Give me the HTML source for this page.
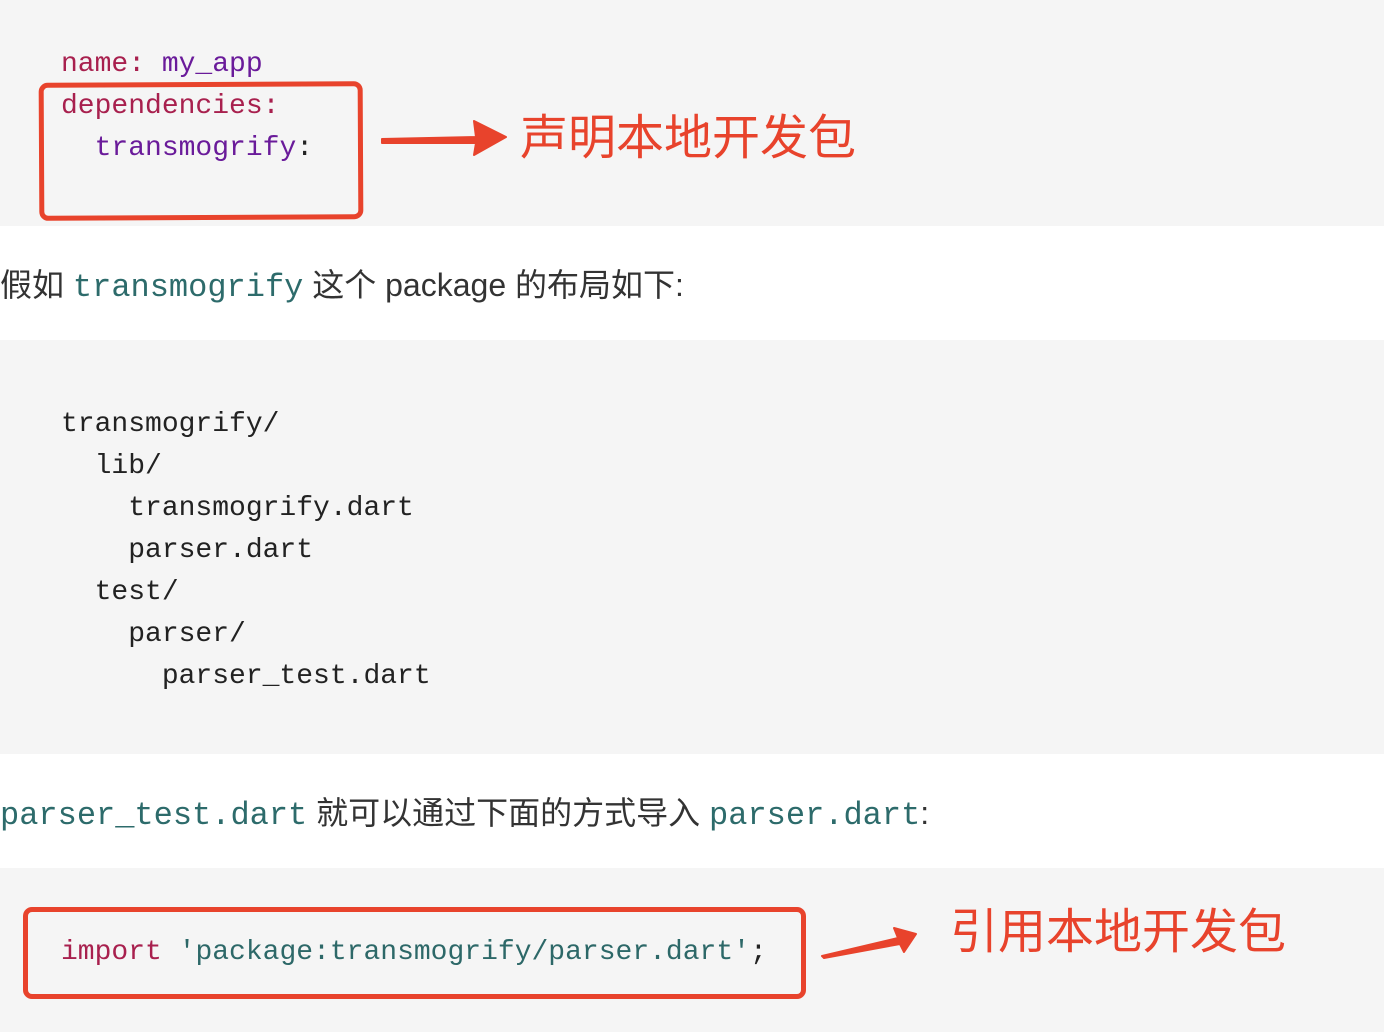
<!DOCTYPE html>
<html><head><meta charset="utf-8"><style>
body{margin:0;width:1384px;height:1032px;background:#fff;position:relative;overflow:hidden;font-family:"Liberation Sans","Noto Sans CJK SC",sans-serif}
.blk{position:absolute;left:0;width:1384px;background:#f5f5f5}
.m{position:absolute;font-family:"Liberation Mono",monospace;font-size:28px;line-height:42px;white-space:pre;color:#222}
.k{color:#a8204e}.p{color:#6a1b9a}.s{color:#2d6868}
.t{position:absolute;left:0;font-size:32px;color:#333;white-space:pre;line-height:40px}
.t code{font-family:"Liberation Mono",monospace;font-size:32px;color:#2d6b6b}
.box{position:absolute;border:5px solid #e8432c;border-radius:9px}
.ann{position:absolute;color:#e8432c;font-family:"Noto Sans CJK SC",sans-serif;font-size:48px;line-height:50px;white-space:nowrap}
</style></head><body>
<div class="blk" style="top:0;height:226px"></div>
<div class="m" style="left:61px;top:44px"><span class="k">name: </span><span class="p">my_app</span>
<span class="k">dependencies:</span>
  <span class="p">transmogrify</span>:</div>
<div class="box" style="left:39px;top:82px;width:314px;height:128px;transform:rotate(-0.3deg)"></div>
<svg style="position:absolute;left:378px;top:115px" width="132" height="46"><path d="M4 24 L98 22 L96 6 L128 22 L96 40 L98 28 L4 28 Z" fill="#e8432c" stroke="#e8432c" stroke-width="2" stroke-linejoin="round"/></svg>
<div class="ann" style="left:520px;top:108px">声明本地开发包</div>

<div class="t" style="top:265px">假如 <code>transmogrify</code> 这个 package 的布局如下:</div>

<div class="blk" style="top:340px;height:414px"></div>
<div class="m" style="left:61px;top:404px">transmogrify/
  lib/
    transmogrify.dart
    parser.dart
  test/
    parser/
      parser_test.dart</div>

<div class="t" style="top:793px"><code>parser_test.dart</code> 就可以通过下面的方式导入 <code>parser.dart</code>:</div>

<div class="blk" style="top:868px;height:164px"></div>
<div class="box" style="left:23px;top:907px;width:773px;height:82px"></div>
<div class="m" style="left:61px;top:932px"><span class="k">import</span> <span class="s">'package:transmogrify/parser.dart'</span>;</div>
<svg style="position:absolute;left:818px;top:920px" width="104" height="42"><path d="M4 36 L80 18 L76 8 L98 14 L86 32 L82 24 L6 38 Z" fill="#e8432c" stroke="#e8432c" stroke-width="2" stroke-linejoin="round"/></svg>
<div class="ann" style="left:950px;top:902px">引用本地开发包</div>
</body></html>
